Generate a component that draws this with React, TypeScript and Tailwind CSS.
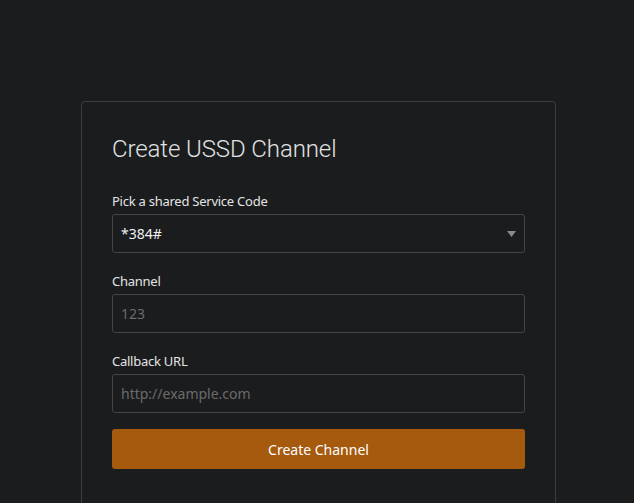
export default function App() {
  return (
    <div className="min-h-[503px] bg-[#1b1c1e] pt-[101px] font-['Noto_Sans',sans-serif]">
      <div className="ml-[81px] w-[475px] h-[420px] rounded-[4px] border border-[#3c3d3f] px-[30px] pt-[31px]">
        <h1 className="font-['Roboto',sans-serif] font-light text-[24px] leading-[32px] tracking-[-0.1px] text-[#e2e2e2]">
          Create USSD Channel
        </h1>

        <div className="mt-[27px]">
          <label className="block text-[13px] leading-[18px] tracking-[-0.25px] text-[#e4e4e4] mb-[4px]">
            Pick a shared Service Code
          </label>
          <div className="relative h-[39px] rounded-[3px] border border-[#444548] flex items-center px-[8px]">
            <span className="text-[14px] text-[#f0f0f0]">*384#</span>
            <svg
              className="absolute right-[8px] top-[16px]"
              width="9"
              height="6"
              viewBox="0 0 9 6"
            >
              <path d="M0 0 H9 L4.5 6 Z" fill="#8a8a8a" />
            </svg>
          </div>
        </div>

        <div className="mt-[19px]">
          <label className="block text-[13px] leading-[18px] tracking-[-0.25px] text-[#e4e4e4] mb-[4px]">
            Channel
          </label>
          <input
            placeholder="123"
            className="block w-full h-[39px] rounded-[3px] border border-[#444548] bg-transparent px-[8px] text-[14px] text-[#f0f0f0] placeholder:text-[#6b6b6b] outline-none"
          />
        </div>

        <div className="mt-[19px]">
          <label className="block text-[13px] leading-[18px] tracking-[-0.25px] text-[#e4e4e4] mb-[4px]">
            Callback URL
          </label>
          <input
            placeholder="http://example.com"
            className="block w-full h-[39px] rounded-[3px] border border-[#444548] bg-transparent px-[8px] text-[14px] text-[#f0f0f0] placeholder:text-[#6b6b6b] outline-none"
          />
        </div>

        <button className="mt-[16px] w-full h-[40px] rounded-[3px] bg-[#a65a0e] text-[14px] text-white">
          Create Channel
        </button>
      </div>
    </div>
  );
}
